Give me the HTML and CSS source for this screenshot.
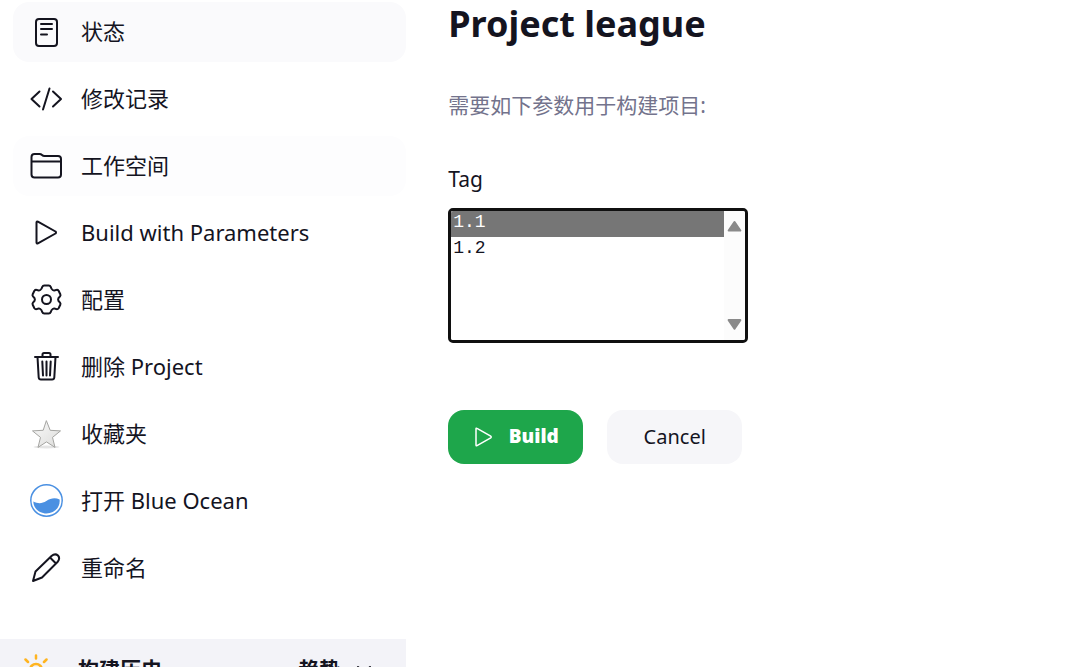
FILE: index.html
```html
<!DOCTYPE html>
<html lang="zh-CN">
<head>
  <meta charset="UTF-8" />
  <meta name="viewport" content="width=device-width, initial-scale=1" />
  <title>Project league</title>
  <link rel="stylesheet" href="styles.css">
</head>
<body>
  <div class="layout">
    <aside class="side-panel">
      <nav class="tasks">
        <a class="task active" href="#">
          <svg class="icon" viewBox="0 0 34 34"><rect x="7" y="4" width="21" height="27" rx="3"/><path d="M12 9h11M12 14h11M12 19.500h6"/></svg>
          <span>状态</span>
        </a>
        <a class="task" href="#">
          <svg class="icon" viewBox="0 0 34 34"><path d="M10.500 9.500L2.500 17l8 7.500M24 9.500l8 7.500-8 7.500M20.500 6.500l-6.500 21"/></svg>
          <span>修改记录</span>
        </a>
        <a class="task hover" href="#">
          <svg class="icon" viewBox="0 0 34 34"><path d="M2.500 25.500V8q0-3 3-3h5q1.500 0 2.500 1t2.500 1H29q3 0 3 3v15.500q0 3-3 3H5.500q-3 0-3-3zM2.500 12.500h29.500"/></svg>
          <span>工作空间</span>
        </a>
        <a class="task" href="#">
          <svg class="icon" viewBox="0 0 34 34"><path d="M7.500 6.500v20q0 1.500 1.400.8L26.500 17.500q1-1 0-2L8.900 5.700q-1.400-.7-1.400.8z"/></svg>
          <span>Build with Parameters</span>
        </a>
        <a class="task" href="#">
          <svg class="icon" viewBox="0 0 34 34"><circle cx="17.500" cy="16.500" r="4.500"/><path d="M15.300 2.500h4.400q1.500 0 2 1.300.6 2.400 2 3.200t3.600-.1q1.500-.3 2.300.9l1.700 3.400q.6 1.200-.4 2.300-1.800 1.500-1.800 3t1.800 3q1 1.100.4 2.300l-1.700 3.400q-.8 1.200-2.300.9-2.200-.9-3.600-.1t-2 3.200q-.5 1.300-2 1.300h-4.400q-1.500 0-2-1.300-.6-2.400-2-3.200t-3.600.1q-1.500.3-2.300-.9l-1.700-3.400q-.6-1.200.4-2.300 1.800-1.500 1.800-3t-1.800-3q-1-1.100-.4-2.300l1.700-3.400q.8-1.200 2.300-.9 2.200.9 3.600.1t2-3.200q.5-1.300 2-1.300z"/></svg>
          <span>配置</span>
        </a>
        <a class="task" href="#">
          <svg class="icon" viewBox="0 0 34 34"><path d="M6 7h23M8.500 7l1.200 20.500q.2 2 2.200 2h11.200q2 0 2.200-2L26.500 7M13.500 6.500v-2Q13.500 3 15 3h5q1.500 0 1.500 1.500v2M13.300 11.500l.7 14M17.500 11.500v14M21.700 11.500l-.7 14"/></svg>
          <span>删除 Project</span>
        </a>
        <a class="task" href="#">
          <svg class="icon" viewBox="0 0 34 34">
            <defs><linearGradient id="star-fill" x1="0" y1="0" x2="1" y2="1"><stop offset="0" stop-color="#fafafa"/><stop offset="1" stop-color="#dcdcda"/></linearGradient></defs>
            <ellipse class="star-shadow" cx="17.500" cy="30" rx="13" ry="1.500"/>
            <path class="star" d="M17.500 4l3.700 9.300 10.300.6-8 6.500 2.500 10-8.500-5.500L9 30.400l2.500-10-8-6.500 10.300-.6z"/>
          </svg>
          <span>收藏夹</span>
        </a>
        <a class="task" href="#">
          <svg class="icon" viewBox="0 0 34 34"><circle class="ocean-ring" cx="17.500" cy="16.500" r="15.700"/><path class="ocean-wave" d="M4.300 17.500c5 2.500 9 2 13-.5 4.500-3 9-3.500 13.300-1.500C31.500 23.500 25 29.500 17.500 29.500S4.500 24 4.300 17.500z"/></svg>
          <span>打开 Blue Ocean</span>
        </a>
        <a class="task" href="#">
          <svg class="icon" viewBox="0 0 34 34"><path d="M4 30l2.500-9.500L22.500 5q3.500-3 6.500-.5 2.500 3-.5 6.500L13 26.500zM21 6.500l6 6"/></svg>
          <span>重命名</span>
        </a>
      </nav>

      <section class="build-history">
        <svg class="icon sun" viewBox="0 0 34 34"><circle cx="17" cy="18" r="6"/><path d="M17 3.500v3M17 29.500v3M2.500 18h3M28.500 18h3M6.500 7.500L9 10M27.500 7.500L25 10M6.500 28.500L9 26M27.500 28.500L25 26"/></svg>
        <h2>构建历史</h2>
        <a class="trend" href="#">趋势
          <svg class="chevron" viewBox="0 0 20 20"><path d="M4 8l6 6 6-6"/></svg>
        </a>
      </section>
    </aside>

    <main class="main-panel">
      <h1>Project league</h1>
      <p class="description">需要如下参数用于构建项目:</p>
      <form>
        <label class="param-label" for="tag">Tag</label>
        <div class="list-box">
          <select id="tag" name="tag" size="5">
            <option selected>1.1</option>
            <option>1.2</option>
          </select>
          <div class="scroll-track">
            <svg viewBox="0 0 18 12"><path d="M9 2l5.500 8h-11z"/></svg>
            <svg viewBox="0 0 18 12"><path d="M9 10l5.500-8h-11z"/></svg>
          </div>
        </div>
        <div class="buttons">
          <button class="btn primary" type="submit">
            <svg class="play" viewBox="0 0 20 20"><path d="M3 2v16q0 1.200 1 .6l13.700-7.800q1-.8 0-1.600L4 1.400q-1-.6-1 .6z"/></svg>
            <span>Build</span>
          </button>
          <button class="btn" type="button"><span>Cancel</span></button>
        </div>
      </form>
    </main>
  </div>
</body>
</html>
```
FILE: styles.css
```css
* {
  box-sizing: border-box;
}
body {
  margin: 0;
  background-color: #fff;
  color: #14141f;
  font-family: 'Noto Sans', 'Noto Sans CJK SC', sans-serif;
  font-size: 22px;
}
.layout {
  display: grid;
  grid-template-columns: 38% 1fr;
  height: 100vh;
  overflow: hidden;
}
.side-panel {
  display: flex;
  flex-direction: column;
}
.tasks {
  display: flex;
  flex-direction: column;
  gap: 7px;
  padding: 2px 0 0 13px;
  margin-bottom: 41px;
}
.task {
  display: flex;
  align-items: center;
  gap: 18px;
  height: 60px;
  padding: 0 16px;
  border-radius: 16px;
  color: inherit;
  line-height: 30px;
  text-decoration: none;
}
.task span {
  padding-bottom: 3px;
}
.task.active {
  background-color: #fafafc;
}
.task.hover {
  background-color: #fdfdfe;
}
.icon {
  flex: none;
  width: 34px;
  height: 34px;
  fill: none;
  stroke: #14141f;
  stroke-width: 2;
  stroke-linecap: round;
  stroke-linejoin: round;
}
.star {
  fill: url(#star-fill);
  stroke: #a5a5a2;
  stroke-width: 1;
}
.star-shadow {
  fill: #e4e4e4;
  stroke: none;
}
.ocean-ring {
  stroke: #4a90e2;
  stroke-width: 1.5;
}
.ocean-wave {
  fill: #4a90e2;
  stroke: none;
}
.build-history {
  display: flex;
  align-items: center;
  flex: none;
  height: 60px;
  padding: 0 32px 0 19px;
  background-color: #f3f3f8;
}
.build-history .sun {
  margin-right: 25px;
  stroke: #ffb420;
  stroke-width: 2.5;
}
.build-history h2 {
  flex: 1;
  margin: 0;
  font-size: 21px;
  line-height: 30px;
}
.trend {
  display: flex;
  align-items: center;
  gap: 14px;
  color: inherit;
  font-size: 21px;
  font-weight: 700;
  line-height: 30px;
  text-decoration: none;
}
.chevron {
  width: 20px;
  height: 20px;
  fill: none;
  stroke: #14141f;
  stroke-width: 2;
  stroke-linecap: round;
}
.main-panel {
  padding: 0 42px;
}
h1 {
  margin: 0;
  font-size: 36px;
  font-weight: 700;
  line-height: 48px;
}
.description {
  margin: 41px 0 0;
  color: #73738c;
  font-size: 21px;
  line-height: 32px;
}
.param-label {
  display: block;
  margin: 42px 0 13px;
  font-size: 21px;
  line-height: 32px;
}
.list-box {
  display: flex;
  width: 300px;
  height: 135px;
  overflow: hidden;
  border: 3px solid #101010;
  border-radius: 5px;
}
.list-box select {
  flex: 1;
  padding: 0;
  overflow: hidden;
  border: none;
  border-radius: 0;
  outline: none;
  background-color: #fff;
  color: #14141f;
  font-family: 'Liberation Mono', monospace;
  font-size: 18px;
}
.list-box option {
  min-height: 26px;
  padding: 1px 2px 0;
}
.list-box option:checked {
  background: linear-gradient(#767676, #767676);
  color: #fff;
}
.scroll-track {
  display: flex;
  flex-direction: column;
  justify-content: space-between;
  width: 21px;
  padding: 9px 1px;
  background-color: #fcfcfc;
}
.scroll-track svg {
  fill: #8a8a8a;
  stroke: #8a8a8a;
  stroke-width: 2;
  stroke-linejoin: round;
}
.buttons {
  display: flex;
  gap: 24px;
  margin-top: 67px;
}
.btn {
  display: flex;
  align-items: center;
  justify-content: center;
  gap: 16px;
  width: 135px;
  height: 54px;
  padding: 0;
  border: none;
  border-radius: 16px;
  background-color: #f6f6f9;
  color: #14141f;
  font-family: inherit;
  font-size: 20px;
  cursor: pointer;
}
.btn span {
  padding-bottom: 2px;
}
.btn.primary {
  background-color: #1ea64b;
  color: #fff;
  font-family: 'Open Sans', sans-serif;
  font-weight: 800;
}
.btn.primary span {
  font-size: 19px;
}
.play {
  width: 20px;
  height: 20px;
  fill: none;
  stroke: #fff;
  stroke-width: 1.5;
}
```
